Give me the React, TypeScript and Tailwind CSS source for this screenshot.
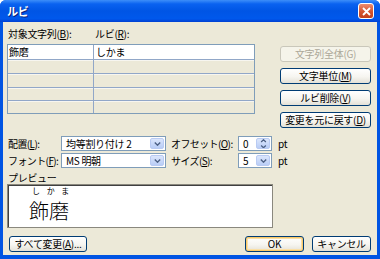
import React from "react";

const btn =
  "flex items-center justify-center whitespace-nowrap rounded-[3px] border border-[#003C74] bg-[linear-gradient(to_bottom,#ffffff_0%,#f6f5f0_55%,#e4e1d7_100%)] text-[10px] leading-none text-black";

function Key({ k }: { k: string }) {
  return (
    <>
      (<u>{k}</u>)
    </>
  );
}

function Chevron({ up = false }: { up?: boolean }) {
  return (
    <svg width="7" height="4" viewBox="0 0 7 4">
      <path
        d={up ? "M0.8 3.4 L3.5 0.8 L6.2 3.4" : "M0.8 0.6 L3.5 3.2 L6.2 0.6"}
        fill="none"
        stroke="#4D6185"
        strokeWidth="1.4"
      />
    </svg>
  );
}

function DropBtn({ spin = false }: { spin?: boolean }) {
  return (
    <div className="ml-auto flex h-full w-[14px] flex-col items-center justify-center gap-[2px] rounded-[2px] border border-[#B9CBF3] bg-[linear-gradient(to_bottom,#dbe6fc,#b9cdf6)]">
      {spin && <Chevron up />}
      <Chevron />
    </div>
  );
}

function Combo({ value, w, spin }: { value: string; w: string; spin?: boolean }) {
  return (
    <div className={`flex h-[15px] items-center border border-[#7F9DB9] bg-white p-[1px] ${w}`}>
      <span className="whitespace-nowrap pl-[3px] leading-none">{value}</span>
      <DropBtn spin={spin} />
    </div>
  );
}

export default function App() {
  const rows = [0, 1, 2, 3, 4];
  return (
    <div className="flex h-[259px] w-[380px] flex-col overflow-hidden rounded-t-[6px] bg-[#0054E3] font-['Noto_Sans_CJK_JP',sans-serif] text-[10px] tracking-[-0.3px] text-black">
      {/* title bar */}
      <div className="flex h-[22px] items-center bg-[linear-gradient(to_bottom,#3d8ef9_0%,#0a62f0_18%,#0055e5_50%,#0058ec_85%,#0040d2_100%)] pl-[7px] pr-[6px]">
        <span className="text-[11px] font-bold leading-none text-white [text-shadow:1px_1px_0_#0a1f7a]">
          ルビ
        </span>
        <div className="ml-auto flex h-[16px] w-[16px] items-center justify-center rounded-[3px] border border-white bg-[linear-gradient(to_bottom,#ec8c70,#d4542f_55%,#c2401c)]">
          <svg width="9" height="9" viewBox="0 0 9 9">
            <path d="M1 1 L8 8 M8 1 L1 8" stroke="white" strokeWidth="1.8" />
          </svg>
        </div>
      </div>

      {/* body */}
      <div className="mx-[3px] mb-[4px] flex flex-1 flex-col bg-[#ECE9D8] pl-[4px] pr-[6px]">
        <div className="flex">
          <div className="flex w-[248px] flex-col">
            <div className="mt-[6px] flex h-[12px] whitespace-nowrap leading-[12px]">
              <span className="w-[87px] pl-[1px]">
                対象文字列<Key k="B" />:
              </span>
              <span className="pl-[1px]">
                ルビ<Key k="R" />:
              </span>
            </div>
            <div className="mt-[4px] border border-[#7F9DB9]">
              {rows.map((i) => (
                <div
                  key={i}
                  className={`flex ${i < 3 ? "h-[14px]" : "h-[13px]"} ${i > 0 ? "border-t border-[#91A7C8]" : ""} ${i === 0 ? "bg-white" : "bg-[#ECE9D8] shadow-[inset_0_1px_0_#f7f6f0]"}`}
                >
                  <div className="flex w-[86px] items-center border-r border-[#91A7C8] pl-[1px] leading-none">
                    {i === 0 ? "飾磨" : ""}
                  </div>
                  <div className="flex flex-1 items-center pl-[2px] leading-none">
                    {i === 0 ? "しかま" : ""}
                  </div>
                </div>
              ))}
            </div>
          </div>

          <div className="ml-auto mt-[24px] flex w-[91px] flex-col gap-[6px]">
            <div className="flex h-[16px] items-center justify-center whitespace-nowrap rounded-[3px] border border-[#C9C7BA] bg-[#F5F4EA] leading-none text-[#ACA899]">
              文字列全体(G)
            </div>
            <div className={`${btn} h-[16px]`}>
              文字単位<Key k="M" />
            </div>
            <div className={`${btn} h-[16px]`}>
              ルビ削除<Key k="V" />
            </div>
            <div className={`${btn} h-[16px]`}>
              変更を元に戻す<Key k="D" />
            </div>
          </div>
        </div>

        <div className="mt-[8px] flex h-[15px] items-center whitespace-nowrap">
          <span className="w-[54px] pl-[1px] leading-none tracking-[-0.6px]">
            配置<Key k="L" />:
          </span>
          <Combo value="均等割り付け 2" w="w-[105px]" />
          <span className="ml-[5px] w-[67px] leading-none tracking-[-0.6px]">
            オフセット<Key k="O" />:
          </span>
          <Combo value="0" w="w-[34px]" spin />
          <span className="ml-[6px] leading-none">pt</span>
        </div>

        <div className="mt-[2px] flex h-[15px] items-center whitespace-nowrap">
          <span className="w-[54px] pl-[1px] leading-none tracking-[-0.6px]">
            フォント<Key k="F" />:
          </span>
          <Combo value="MS 明朝" w="w-[105px]" />
          <span className="ml-[5px] w-[67px] leading-none tracking-[-0.6px]">
            サイズ<Key k="S" />:
          </span>
          <Combo value="5" w="w-[34px]" />
          <span className="ml-[6px] leading-none">pt</span>
        </div>

        <div className="mt-[4px] h-[12px] pl-[1px] leading-[12px]">プレビュー</div>
        <div className="h-[44px] w-[266px] border border-[#8a887e] bg-white shadow-[inset_1px_1px_0_#404040]">
          <div className="ml-[21px] flex w-[43px] flex-col">
            <div className="flex h-[12px] justify-between px-[3px] text-[8px] leading-[12px]">
              <span>し</span>
              <span>か</span>
              <span>ま</span>
            </div>
            <div className="-mt-[1px] h-[29px] text-[20px] font-light leading-[29px] tracking-normal">飾磨</div>
          </div>
        </div>

        <div className="mt-[8px] flex h-[16px] items-center">
          <div className={`${btn} ml-[2px] h-[16px] w-[78px]`}>
            すべて変更<Key k="A" />...
          </div>
          <div
            className={`${btn} ml-auto h-[16px] w-[59px] shadow-[inset_0_0_0_1px_#f9c96a,inset_0_0_0_2px_#fbe0a6]`}
          >
            OK
          </div>
          <div className={`${btn} ml-[8px] h-[16px] w-[59px]`}>キャンセル</div>
        </div>
      </div>
    </div>
  );
}
